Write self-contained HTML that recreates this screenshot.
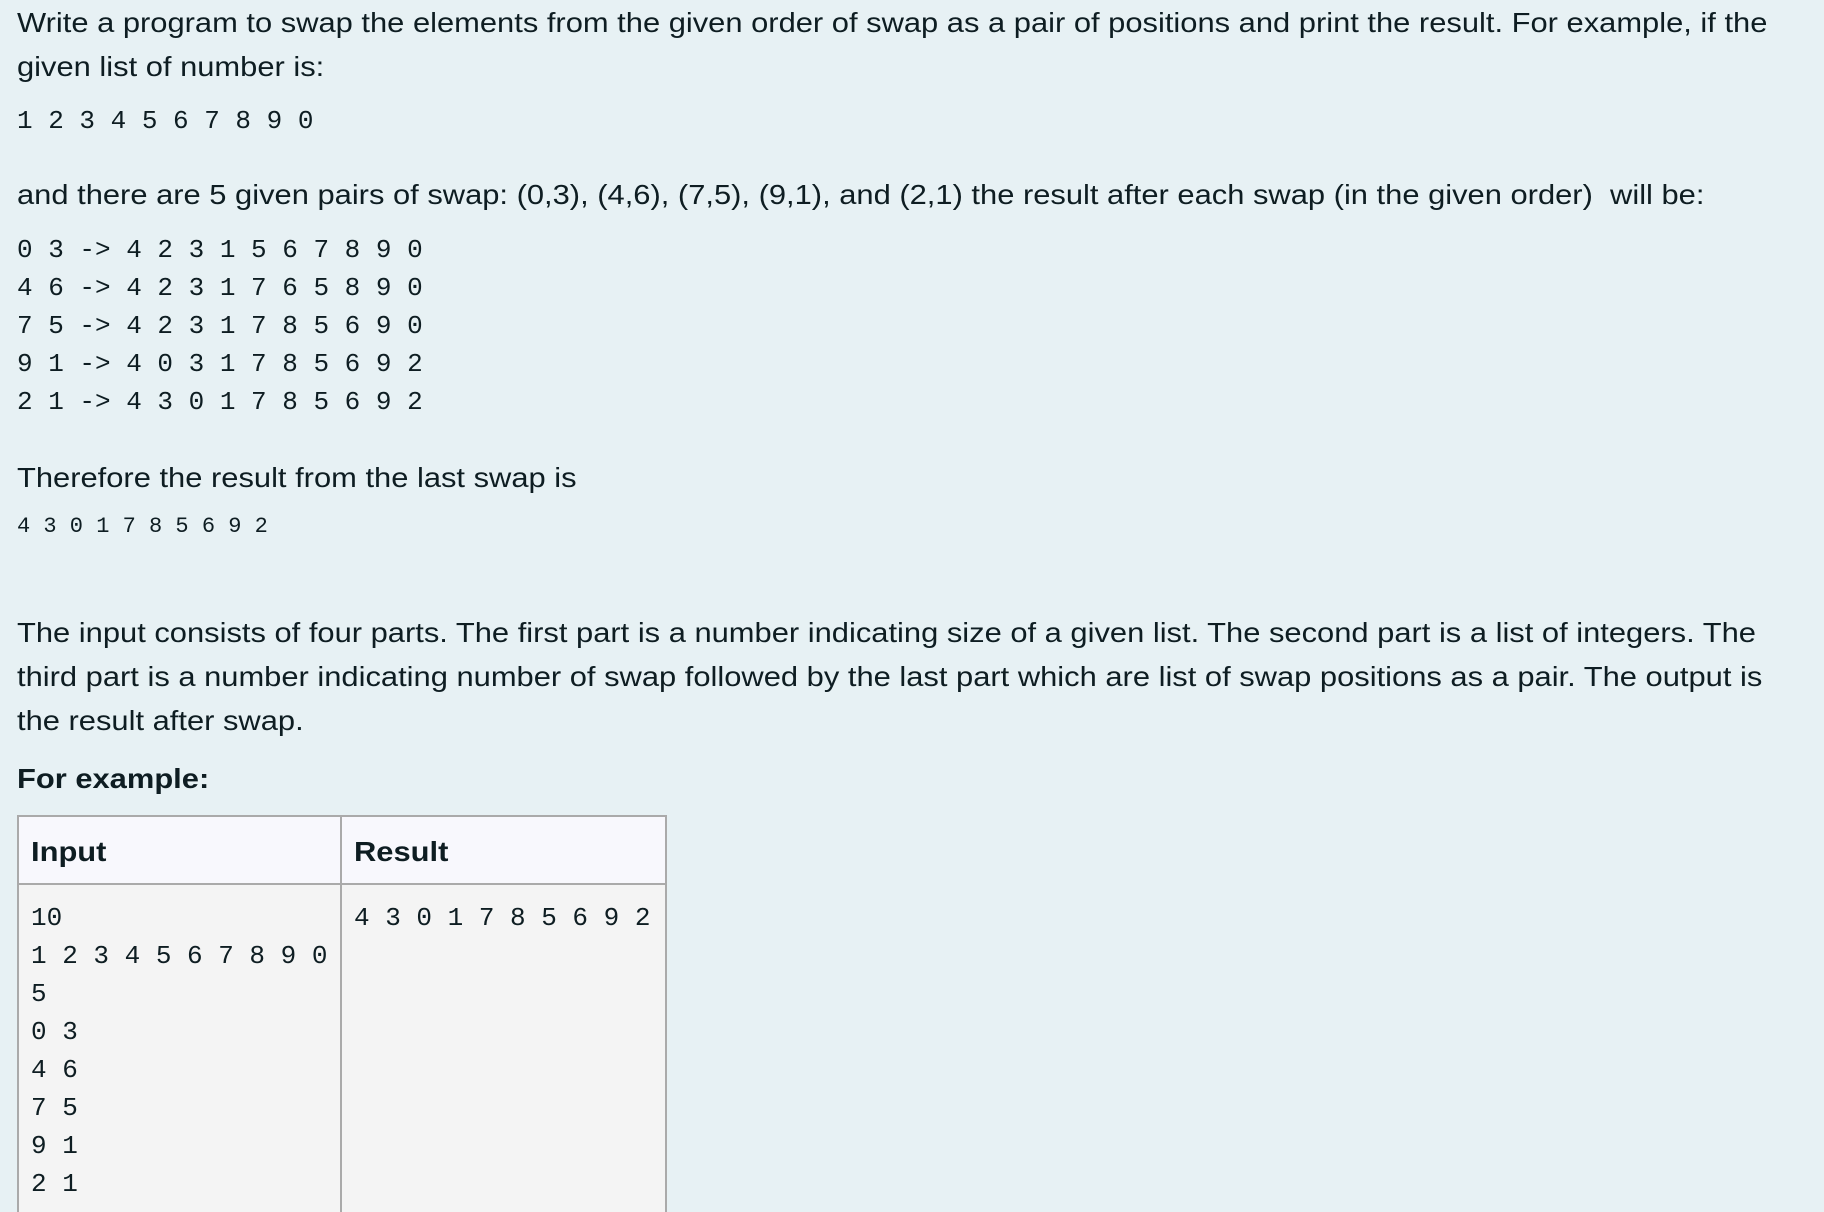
<!DOCTYPE html>
<html><head><meta charset="utf-8"><style>
html,body{margin:0;padding:0;overflow:hidden;height:1212px;}
body{width:1824px;background:#e7f1f4;color:#0e1d22;font-family:"Liberation Sans",sans-serif;position:relative;}
.t{position:absolute;left:17px;white-space:nowrap;font-size:28px;line-height:32px;transform:translateY(-50%) scaleX(1.103);transform-origin:0 50%;}
.m{position:absolute;white-space:nowrap;font-family:"Liberation Mono",monospace;font-size:26px;line-height:30px;transform:translateY(-50%);}
.s{font-size:22px;}
.b{font-weight:bold;}
</style></head><body>
<div class="t" style="top:23px">Write a program to swap the elements from the given order of swap as a pair of positions and print the result. For example, if the</div>
<div class="t" style="top:67px">given list of number is:</div>
<div class="m" style="left:17px;top:121px">1 2 3 4 5 6 7 8 9 0</div>
<div class="t" style="top:195px">and there are 5 given pairs of swap: (0,3), (4,6), (7,5), (9,1), and (2,1) the result after each swap (in the given order)&nbsp; will be:</div>
<div class="m" style="left:17px;top:250px">0 3 -&gt; 4 2 3 1 5 6 7 8 9 0</div>
<div class="m" style="left:17px;top:288px">4 6 -&gt; 4 2 3 1 7 6 5 8 9 0</div>
<div class="m" style="left:17px;top:326px">7 5 -&gt; 4 2 3 1 7 8 5 6 9 0</div>
<div class="m" style="left:17px;top:364px">9 1 -&gt; 4 0 3 1 7 8 5 6 9 2</div>
<div class="m" style="left:17px;top:402px">2 1 -&gt; 4 3 0 1 7 8 5 6 9 2</div>
<div class="t" style="top:478px">Therefore the result from the last swap is</div>
<div class="m s" style="left:17px;top:527px">4 3 0 1 7 8 5 6 9 2</div>
<div class="t" style="top:633px">The input consists of four parts. The first part is a number indicating size of a given list. The second part is a list of integers. The</div>
<div class="t" style="top:677px">third part is a number indicating number of swap followed by the last part which are list of swap positions as a pair. The output is</div>
<div class="t" style="top:721px">the result after swap.</div>
<div class="t b" style="top:779px">For example:</div>
<div style="position:absolute;left:17px;top:815px;width:650px;height:70px;background:#f8f8fd;border:2px solid #aaa;box-sizing:border-box;"></div>
<div style="position:absolute;left:17px;top:883px;width:650px;height:329px;background:#f4f4f4;border:2px solid #aaa;border-bottom:none;box-sizing:border-box;"></div>
<div style="position:absolute;left:340px;top:815px;width:2px;height:397px;background:#aaa;"></div>
<div class="t b" style="left:31px;top:852px">Input</div>
<div class="t b" style="left:354px;top:852px">Result</div>
<div class="m" style="left:31px;top:918px">10</div>
<div class="m" style="left:31px;top:956px">1 2 3 4 5 6 7 8 9 0</div>
<div class="m" style="left:31px;top:994px">5</div>
<div class="m" style="left:31px;top:1032px">0 3</div>
<div class="m" style="left:31px;top:1070px">4 6</div>
<div class="m" style="left:31px;top:1108px">7 5</div>
<div class="m" style="left:31px;top:1146px">9 1</div>
<div class="m" style="left:31px;top:1184px">2 1</div>
<div class="m" style="left:354px;top:918px">4 3 0 1 7 8 5 6 9 2</div>
</body></html>
